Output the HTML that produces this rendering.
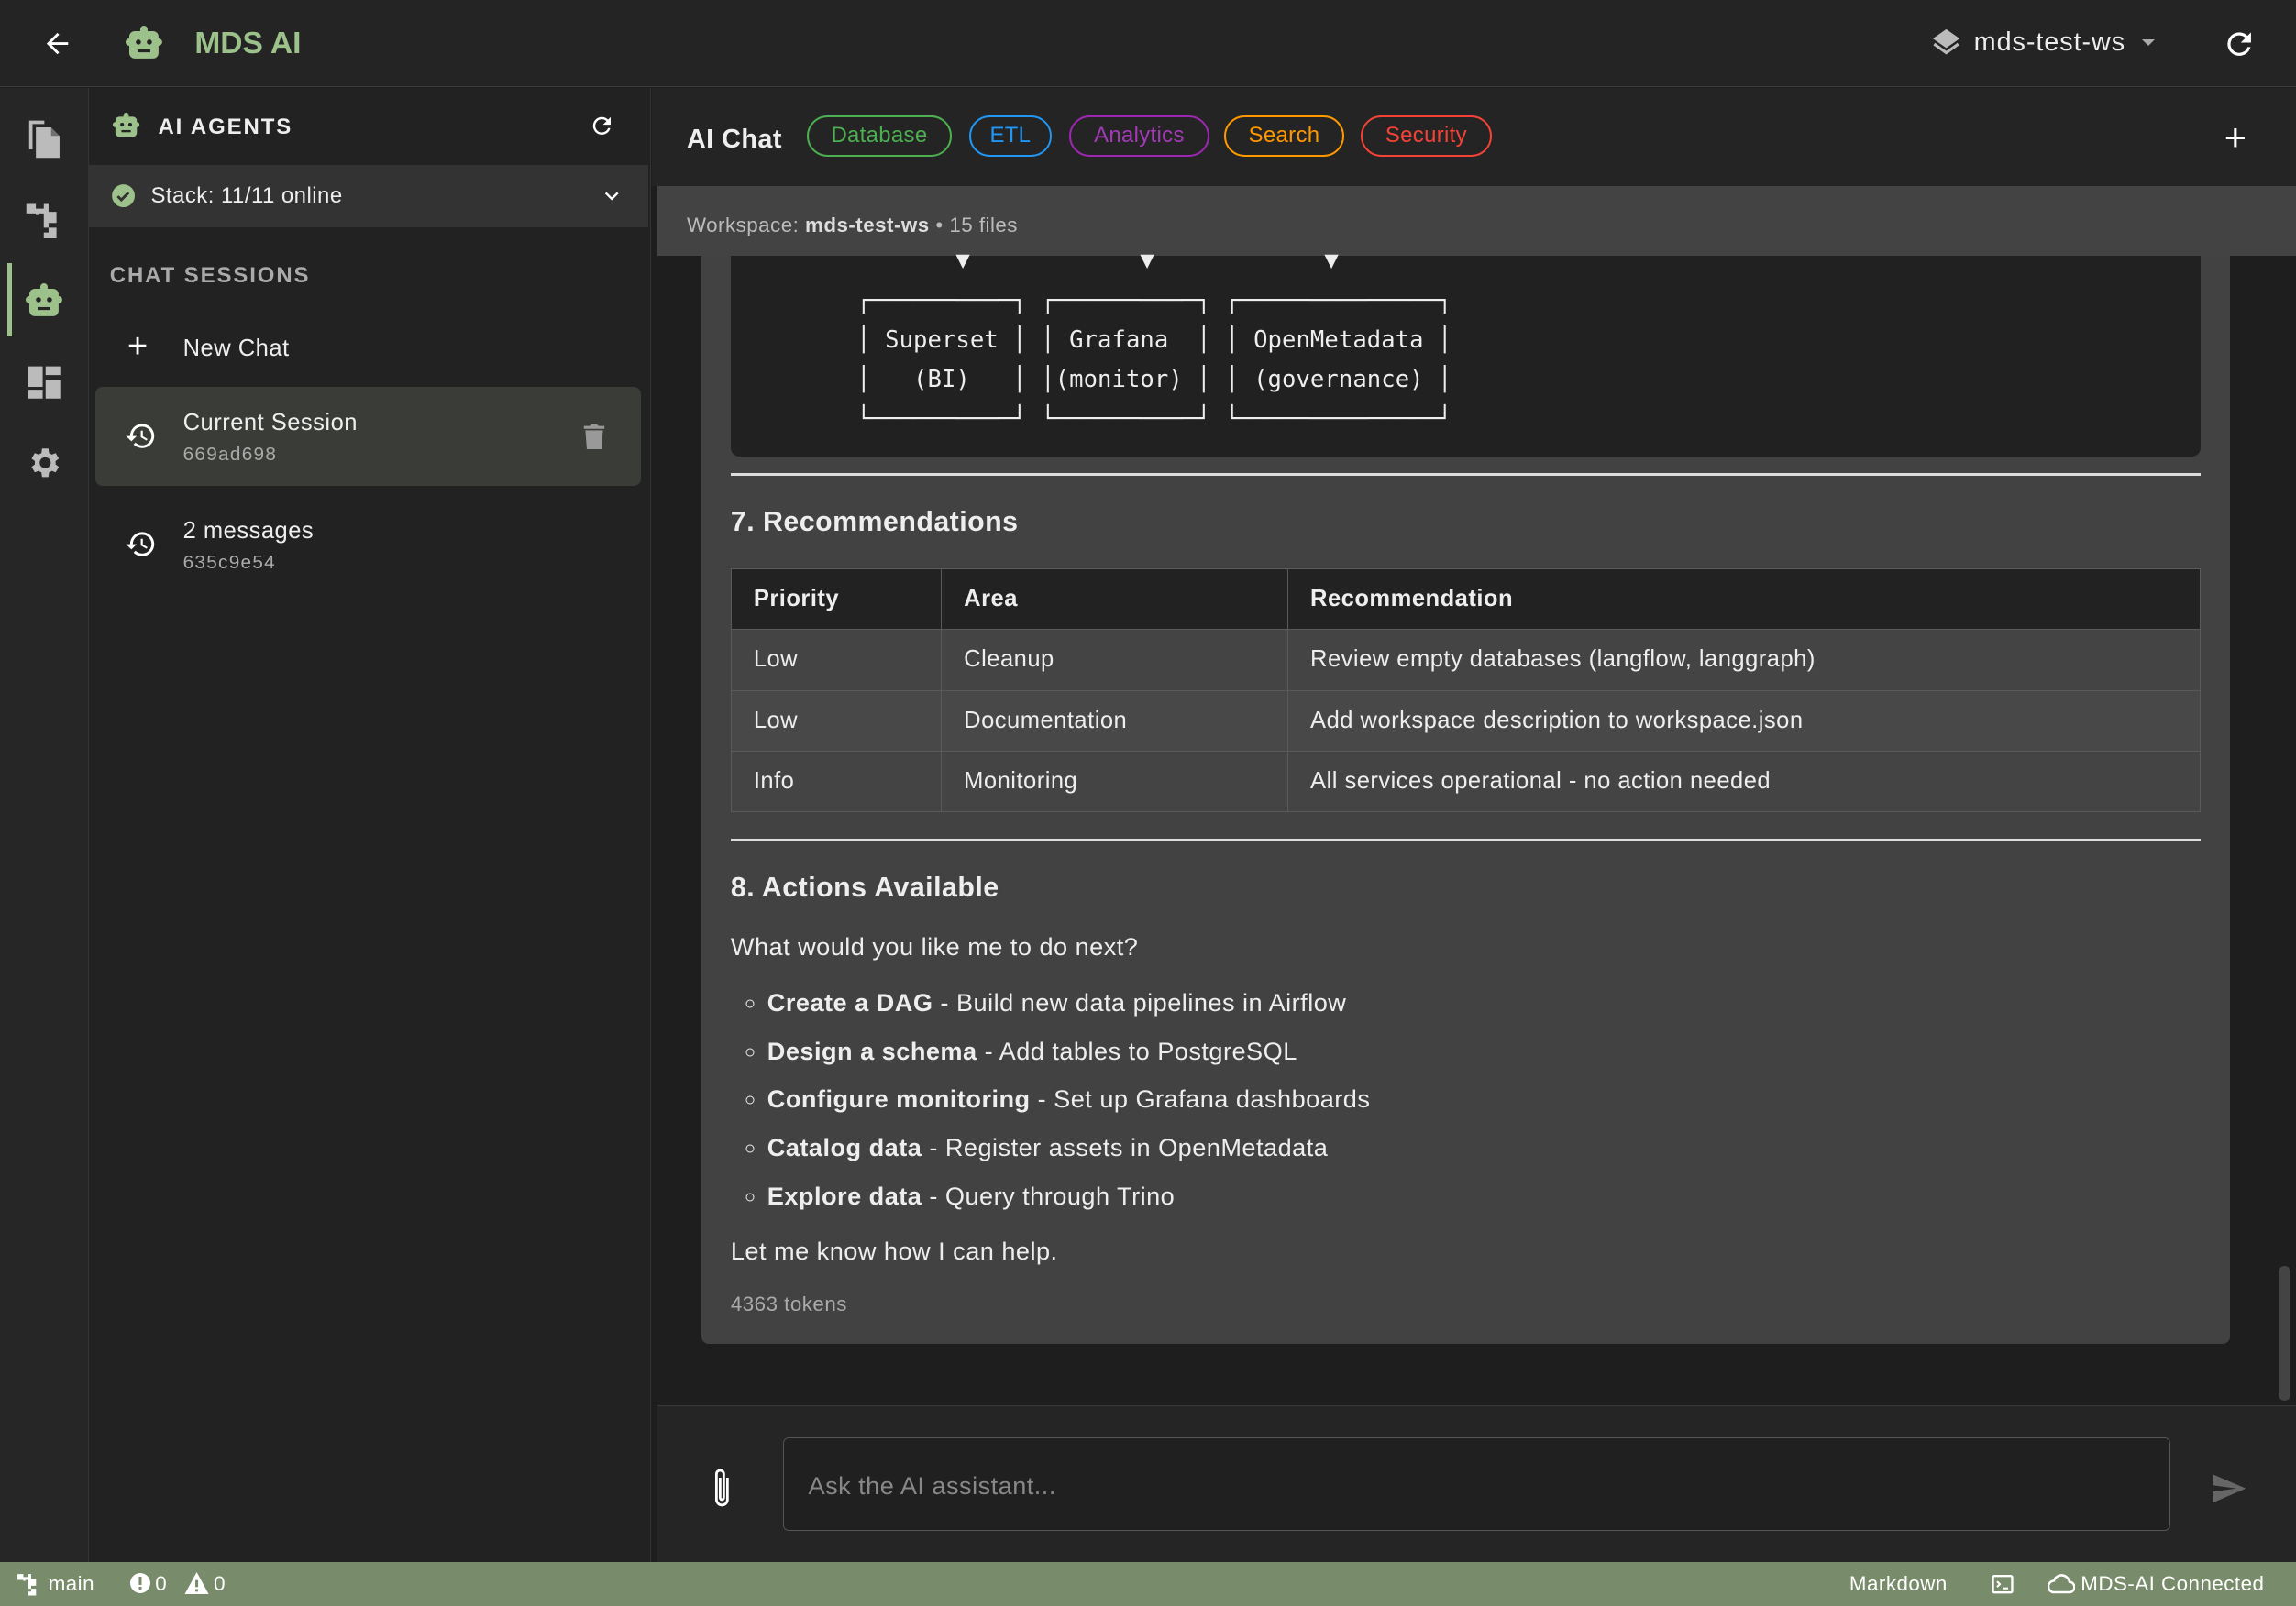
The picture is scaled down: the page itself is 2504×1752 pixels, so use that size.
<!DOCTYPE html>
<html><head><meta charset="utf-8">
<style>
html,body{margin:0;padding:0;}
html{width:2504px;height:1752px;overflow:hidden;background:#1e1e1e;}
body{zoom:1.59694;width:1568px;height:1097px;position:relative;overflow:hidden;font-family:"Liberation Sans",sans-serif;color:#eee;letter-spacing:0.3px;}
.abs{position:absolute;}
svg{display:block;}
.tag{position:absolute;top:79px;height:28px;border:1.5px solid;border-radius:15px;box-sizing:border-box;font-size:15px;line-height:25px;text-align:center;letter-spacing:0.2px;}
table{border-collapse:collapse;}
td,th{border:1px solid #5a5a5a;text-align:left;font-size:16px;padding:0 15px;height:41px;}
th{background:#222;font-weight:bold;}
li{margin:0 0 13px 0;}
</style></head><body>
<!-- top bar -->
<div class="abs" style="left:0;top:0;width:1568px;height:59px;background:#242424;border-bottom:1px solid #3a3a3a;"></div>
<svg class="abs" style="left:28px;top:19px" width="22" height="22" viewBox="0 0 24 24"><path d="M20 11H7.8l5.6-5.6L12 4l-8 8 8 8 1.4-1.4L7.8 13H20z" fill="#fff"/></svg>
<svg class="abs" style="left:83px;top:15px" width="30" height="30" viewBox="0 0 24 24"><path fill="#9cc18a" d="M12 2a2 2 0 0 1 2 2v1h3a3 3 0 0 1 3 3v1a2 2 0 0 1 0 4v4a3 3 0 0 1-3 3H7a3 3 0 0 1-3-3v-4a2 2 0 0 1 0-4V8a3 3 0 0 1 3-3h3V4a2 2 0 0 1 2-2z"/><circle cx="9" cy="11" r="1.4" fill="#242424"/><circle cx="15" cy="11" r="1.4" fill="#242424"/><rect x="8.5" y="15" width="7" height="1.6" fill="#242424"/></svg>
<div class="abs" style="left:133px;top:18px;font-size:21px;color:#9cc18a;font-weight:bold;letter-spacing:0px;">MDS AI</div>
<svg class="abs" style="left:1318px;top:18px" width="22" height="22" viewBox="0 0 24 24"><path fill="#bbb" d="M12 2 2 9l10 7 10-7z"/><path fill="none" stroke="#bbb" stroke-width="2.2" d="M3 13l9 6.5 9-6.5"/></svg>
<div class="abs" style="left:1348px;top:19px;font-size:18px;color:#eee;letter-spacing:0.6px;">mds-test-ws</div>
<div class="abs" style="left:1463px;top:27px;width:0;height:0;border-left:5px solid transparent;border-right:5px solid transparent;border-top:5px solid #aaa;"></div>
<svg class="abs" style="left:1517px;top:18px" width="24" height="24" viewBox="0 0 24 24"><path fill="#fff" d="M17.65 6.35A7.96 7.96 0 0 0 12 4a8 8 0 1 0 7.73 10h-2.08A6 6 0 1 1 12 6c1.66 0 3.14.69 4.22 1.780L13 11h7V4z"/></svg>

<!-- activity bar -->
<div class="abs" style="left:0;top:60px;width:60px;height:1007px;background:#262626;border-right:1px solid #333;"></div>
<div class="abs" style="left:5px;top:180px;width:3px;height:50px;background:#9cc18a;"></div>
<svg class="abs" style="left:16px;top:80px" width="28" height="30" viewBox="0 0 24 26"><path fill="#bbb" d="M3 2h9v2H5v15H3z"/><path fill="#bbb" d="M7 6h9l5 5v13H7z"/><path fill="#262626" d="M16 6v5h5z" opacity=".5"/></svg>
<svg class="abs" style="left:17px;top:137px" width="26" height="26" viewBox="0 0 24 24"><path fill="#bbb" d="M1 2h6v3h5V2h3v5h5v7h-5v3h5v7h-8v-4h3v-3h-3V8h-3v1H7V8H1z"/></svg>
<svg class="abs" style="left:15px;top:191px" width="30" height="30" viewBox="0 0 24 24"><path fill="#9cc18a" d="M12 2a2 2 0 0 1 2 2v1h3a3 3 0 0 1 3 3v1a2 2 0 0 1 0 4v4a3 3 0 0 1-3 3H7a3 3 0 0 1-3-3v-4a2 2 0 0 1 0-4V8a3 3 0 0 1 3-3h3V4a2 2 0 0 1 2-2z"/><circle cx="9" cy="11" r="1.4" fill="#262626"/><circle cx="15" cy="11" r="1.4" fill="#262626"/><rect x="8.5" y="15" width="7" height="1.6" fill="#262626"/></svg>
<svg class="abs" style="left:18px;top:249px" width="24" height="24" viewBox="0 0 24 24"><path fill="#bbb" d="M1 1h10v14H1zM13 1h10v6H13zM13 10h10v13H13zM1 17h10v6H1z"/></svg>
<svg class="abs" style="left:17px;top:303px" width="26" height="26" viewBox="0 0 24 24"><path fill="#bbb" d="M19.4 13a7.5 7.5 0 0 0 0-2l2.1-1.6-2-3.5-2.5 1a7 7 0 0 0-1.7-1L14.9 3h-4l-.4 2.9a7 7 0 0 0-1.7 1l-2.5-1-2 3.5L6.4 11a7.5 7.5 0 0 0 0 2l-2.1 1.6 2 3.5 2.5-1a7 7 0 0 0 1.7 1l.4 2.9h4l.4-2.9a7 7 0 0 0 1.7-1l2.5 1 2-3.5zM12.9 15.5a3.5 3.5 0 1 1 0-7 3.5 3.5 0 0 1 0 7z"/></svg>

<!-- sidebar -->
<div class="abs" style="left:61px;top:60px;width:383px;height:1007px;background:#222;border-right:1px solid #333;"></div>
<svg class="abs" style="left:75px;top:75px" width="22" height="22" viewBox="0 0 24 24"><path fill="#9cc18a" d="M12 2a2 2 0 0 1 2 2v1h3a3 3 0 0 1 3 3v1a2 2 0 0 1 0 4v4a3 3 0 0 1-3 3H7a3 3 0 0 1-3-3v-4a2 2 0 0 1 0-4V8a3 3 0 0 1 3-3h3V4a2 2 0 0 1 2-2z"/><circle cx="9" cy="11" r="1.4" fill="#222"/><circle cx="15" cy="11" r="1.4" fill="#222"/><rect x="8.5" y="15" width="7" height="1.6" fill="#222"/></svg>
<div class="abs" style="left:108px;top:78px;font-size:15px;font-weight:bold;letter-spacing:1.2px;">AI AGENTS</div>
<svg class="abs" style="left:402px;top:77px" width="18" height="18" viewBox="0 0 24 24"><path fill="#fff" d="M17.65 6.35A7.96 7.96 0 0 0 12 4a8 8 0 1 0 7.73 10h-2.08A6 6 0 1 1 12 6c1.66 0 3.14.69 4.22 1.78L13 11h7V4z"/></svg>
<div class="abs" style="left:61px;top:113px;width:382px;height:42px;background:#333;"></div>
<svg class="abs" style="left:76px;top:125px" width="17" height="17" viewBox="0 0 24 24"><circle cx="12" cy="12" r="11" fill="#9cc18a"/><path d="M6.5 12.5l3.5 3.5 7-7" stroke="#333" stroke-width="2.6" fill="none"/></svg>
<div class="abs" style="left:103px;top:125px;font-size:15px;">Stack: 11/11 online</div>
<svg class="abs" style="left:411px;top:127px" width="14" height="14" viewBox="0 0 24 24"><path d="M5 8l7 7 7-7" stroke="#fff" stroke-width="2.6" fill="none"/></svg>
<div class="abs" style="left:75px;top:180px;font-size:15px;font-weight:bold;letter-spacing:1.2px;color:#aaa;">CHAT SESSIONS</div>
<div class="abs" style="left:87px;top:225px;font-size:24px;line-height:24px;color:#fff;">+</div>
<div class="abs" style="left:125px;top:229px;font-size:16px;">New Chat</div>
<div class="abs" style="left:65px;top:264px;width:373px;height:68px;background:#3a3d37;border-radius:5px;"></div>
<svg class="abs" style="left:85px;top:287px" width="22" height="22" viewBox="0 0 24 24"><path fill="#fff" d="M13 3a9 9 0 0 0-9 9H1l4 4 4-4H6a7 7 0 1 1 2.05 4.95l-1.42 1.42A9 9 0 1 0 13 3zm-1 5v5l4.3 2.5.7-1.2-3.5-2.1V8z"/></svg>
<div class="abs" style="left:125px;top:280px;font-size:16px;">Current Session</div>
<div class="abs" style="left:125px;top:303px;font-size:13px;color:#aaa;letter-spacing:.8px;">669ad698</div>
<svg class="abs" style="left:398px;top:290px" width="15" height="17" viewBox="0 0 14 17"><path fill="#999" d="M1 4h12l-1 13H2zM0 1h4l1-1h4l1 1h4v2H0z"/></svg>
<svg class="abs" style="left:85px;top:361px" width="22" height="22" viewBox="0 0 24 24"><path fill="#fff" d="M13 3a9 9 0 0 0-9 9H1l4 4 4-4H6a7 7 0 1 1 2.05 4.95l-1.42 1.42A9 9 0 1 0 13 3zm-1 5v5l4.3 2.5.7-1.2-3.5-2.1V8z"/></svg>
<div class="abs" style="left:125px;top:354px;font-size:16px;">2 messages</div>
<div class="abs" style="left:125px;top:377px;font-size:13px;color:#aaa;letter-spacing:.8px;">635c9e54</div>

<!-- chat header -->
<div class="abs" style="left:445px;top:60px;width:1123px;height:67px;background:#242424;"></div>
<div class="abs" style="left:469px;top:85px;font-size:18px;font-weight:bold;">AI Chat</div>
<div class="tag" style="left:551px;width:99px;border-color:#4caf50;color:#4caf50;">Database</div>
<div class="tag" style="left:662px;width:56px;border-color:#2196f3;color:#2196f3;">ETL</div>
<div class="tag" style="left:730px;width:96px;border-color:#9c27b0;color:#a33ab6;">Analytics</div>
<div class="tag" style="left:836px;width:82px;border-color:#ff9800;color:#ff9800;">Search</div>
<div class="tag" style="left:929px;width:90px;border-color:#f44336;color:#f44336;">Security</div>
<div class="abs" style="left:1519px;top:81px;font-size:26px;line-height:26px;color:#fff;">+</div>
<div class="abs" style="left:449px;top:127px;width:1119px;height:48px;background:#434343;"></div>
<div class="abs" style="left:469px;top:146px;font-size:14px;color:#bbb;">Workspace: <b style="color:#ddd">mds-test-ws</b> • 15 files</div>

<!-- message card -->
<div class="abs" style="left:479px;top:175px;width:1044px;height:743px;background:#424242;border-radius:0 0 5px 5px;"></div>
<div class="abs" style="left:499px;top:175px;width:1004px;height:137px;background:#212121;border-radius:0 0 6px 6px;"></div>
<pre class="abs" style="left:585px;top:165px;margin:0;font-family:'DejaVu Sans Mono','Liberation Mono',monospace;font-size:16px;line-height:27px;color:#eee;letter-spacing:0.05px;">       ▼            ▼            ▼
┌──────────┐ ┌──────────┐ ┌──────────────┐
│ Superset │ │ Grafana  │ │ OpenMetadata │
│   (BI)   │ │(monitor) │ │ (governance) │
└──────────┘ └──────────┘ └──────────────┘</pre>
<div class="abs" style="left:499px;top:323px;width:1004px;height:2px;background:#ddd;"></div>
<div class="abs" style="left:499px;top:346px;font-size:19px;font-weight:bold;">7. Recommendations</div>
<table class="abs" style="left:499px;top:388px;width:1004px;">
<tr><th style="width:113px">Priority</th><th style="width:206px">Area</th><th>Recommendation</th></tr>
<tr style="background:#444"><td>Low</td><td>Cleanup</td><td>Review empty databases (langflow, langgraph)</td></tr>
<tr style="background:#484848"><td>Low</td><td>Documentation</td><td>Add workspace description to workspace.json</td></tr>
<tr style="background:#444"><td>Info</td><td>Monitoring</td><td>All services operational - no action needed</td></tr>
</table>
<div class="abs" style="left:499px;top:573px;width:1004px;height:2px;background:#ddd;"></div>
<div class="abs" style="left:499px;top:596px;font-size:19px;font-weight:bold;">8. Actions Available</div>
<div class="abs" style="left:499px;top:637px;font-size:17px;">What would you like me to do next?</div>
<ul class="abs" style="left:499px;top:675px;margin:0;padding-left:25px;font-size:17px;list-style:circle;line-height:20px;">
<li><b>Create a DAG</b> - Build new data pipelines in Airflow</li>
<li><b>Design a schema</b> - Add tables to PostgreSQL</li>
<li><b>Configure monitoring</b> - Set up Grafana dashboards</li>
<li><b>Catalog data</b> - Register assets in OpenMetadata</li>
<li><b>Explore data</b> - Query through Trino</li>
</ul>
<div class="abs" style="left:499px;top:845px;font-size:17px;">Let me know how I can help.</div>
<div class="abs" style="left:499px;top:883px;font-size:14px;color:#aaa;">4363 tokens</div>
<div class="abs" style="left:1556px;top:865px;width:8px;height:92px;background:#444;border-radius:4px;"></div>

<!-- input -->
<div class="abs" style="left:449px;top:960px;width:1119px;height:107px;background:#252525;border-top:1px solid #3a3a3a;"></div>
<svg class="abs" style="left:484px;top:1002px" width="18" height="30" viewBox="0 0 12 24"><path d="M9 6v12a3 3 0 0 1-6 0V4a2 2 0 0 1 4 0v13a1 1 0 0 1-2 0V6" stroke="#fff" stroke-width="1.4" fill="none"/></svg>
<div class="abs" style="left:535px;top:982px;width:947px;height:64px;box-sizing:border-box;border:1px solid #555;border-radius:4px;background:#202020;"></div>
<div class="abs" style="left:552px;top:1005px;font-size:17px;color:#888;">Ask the AI assistant...</div>
<svg class="abs" style="left:1508px;top:1004px" width="28" height="26" viewBox="0 0 24 24"><path fill="#666" d="M2 21l21-9L2 3v7l15 2-15 2z"/></svg>

<!-- status bar -->
<div class="abs" style="left:0;top:1067px;width:1568px;height:30px;background:#788b6a;"></div>
<svg class="abs" style="left:11px;top:1074px" width="16" height="16" viewBox="0 0 24 24"><path fill="#fff" d="M1 2h6v3h5V2h3v5h5v7h-5v3h5v7h-8v-4h3v-3h-3V8h-3v1H7V8H1z"/></svg>
<div class="abs" style="left:33px;top:1074px;font-size:14px;color:#fff;">main</div>
<svg class="abs" style="left:88px;top:1074px" width="15" height="15" viewBox="0 0 24 24"><circle cx="12" cy="12" r="11" fill="#fff"/><rect x="10.5" y="5" width="3" height="9" fill="#788b6a"/><rect x="10.5" y="16" width="3" height="3" fill="#788b6a"/></svg>
<div class="abs" style="left:106px;top:1074px;font-size:14px;color:#fff;">0</div>
<svg class="abs" style="left:126px;top:1074px" width="17" height="15" viewBox="0 0 24 22"><path fill="#fff" d="M12 0l12 22H0z"/><rect x="10.6" y="8" width="2.8" height="7" fill="#788b6a"/><rect x="10.6" y="17" width="2.8" height="2.6" fill="#788b6a"/></svg>
<div class="abs" style="left:146px;top:1074px;font-size:14px;color:#fff;">0</div>
<div class="abs" style="left:1263px;top:1074px;font-size:14px;color:#fff;">Markdown</div>
<svg class="abs" style="left:1360px;top:1075px" width="15" height="14" viewBox="0 0 16 14"><rect x="1" y="1" width="14" height="12" rx="1" fill="none" stroke="#fff" stroke-width="1.6"/><path d="M4 5l2 2-2 2M8 10h4" stroke="#fff" stroke-width="1.4" fill="none"/></svg>
<svg class="abs" style="left:1398px;top:1075px" width="19" height="14" viewBox="0 0 24 16"><path d="M6 15a5 5 0 0 1-.5-10A7 7 0 0 1 19 6a4.5 4.5 0 0 1-.5 9z" fill="none" stroke="#fff" stroke-width="2"/></svg>
<div class="abs" style="left:1421px;top:1074px;font-size:14px;color:#fff;">MDS-AI Connected</div>
</body></html>
